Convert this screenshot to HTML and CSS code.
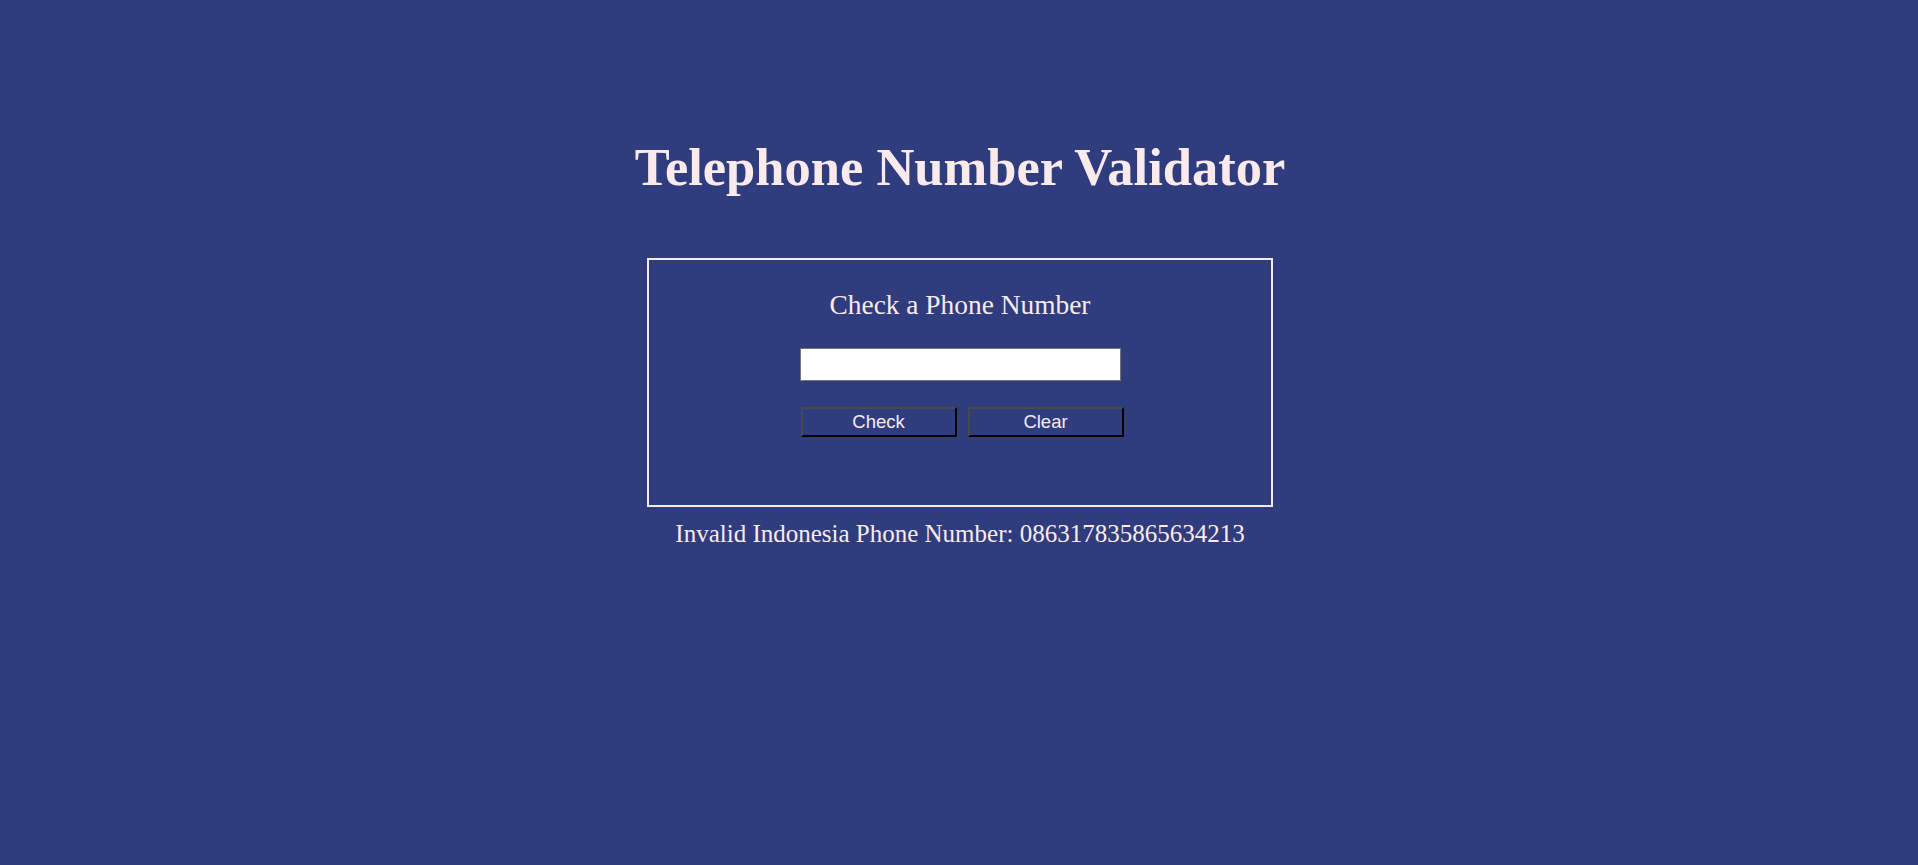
FILE: index.html
```html
<!DOCTYPE html>
<html lang="en">
<head>
<meta charset="utf-8">
<title>Telephone Number Validator</title>
<link rel="stylesheet" href="styles.css">
</head>
<body>
<main class="app">
  <h1 class="title">Telephone Number Validator</h1>
  <section class="card">
    <h2 class="card-title">Check a Phone Number</h2>
    <input class="phone-input" type="text">
    <div class="actions">
      <button class="btn" type="button">Check</button>
      <button class="btn" type="button">Clear</button>
    </div>
  </section>
  <p class="result">Invalid Indonesia Phone Number: 086317835865634213</p>
</main>
</body>
</html>
```
FILE: styles.css
```css
html, body {
  margin: 0;
  padding: 0;
}
body {
  background: #2f3c7e;
  color: #fbeaeb;
  font-family: "Liberation Serif", "Times New Roman", serif;
  min-height: 100vh;
}
.app {
  display: flex;
  flex-direction: column;
  align-items: center;
  padding-top: 137px;
  padding-left: 2px;
}
.title {
  margin: 0;
  font-size: 52.5px;
  font-weight: bold;
  line-height: normal;
}
.card {
  margin-top: 61px;
  width: 622px;
  height: 215px;
  border: 2px solid #fbeaeb;
  display: flex;
  flex-direction: column;
  align-items: center;
  padding-top: 30px;
  box-sizing: content-box;
}
.card-title {
  margin: 0;
  font-size: 27.4px;
  font-weight: normal;
  line-height: normal;
}
.phone-input {
  margin-top: 27px;
  width: 321px;
  height: 33px;
  box-sizing: border-box;
  border: 1px solid #767676;
  background: #fff;
  padding: 0 4px;
}
.actions {
  margin-top: 26px;
  display: flex;
  gap: 11px;
  padding-left: 4px;
}
.btn {
  width: 156px;
  height: 30px;
  box-sizing: border-box;
  background: #2f3c7e;
  color: #fbeaeb;
  font-family: "Liberation Sans", Arial, sans-serif;
  font-size: 18.5px;
  border: 2px solid;
  border-color: #4a4a4a #000 #000 #4a4a4a;
  padding: 0;
  line-height: 1;
}
.result {
  margin: 13px 0 0;
  font-size: 25px;
  line-height: normal;
}
```
